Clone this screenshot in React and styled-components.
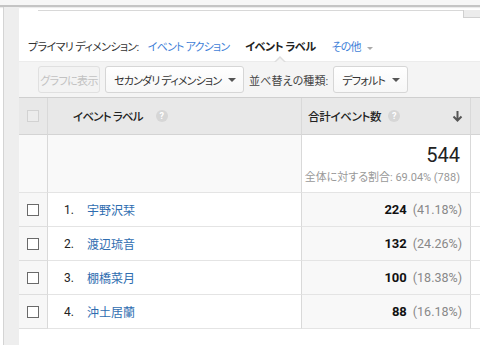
import React from "react";
import styled, { createGlobalStyle } from "styled-components";

const GlobalStyle = createGlobalStyle`
  html, body {
    margin: 0;
    padding: 0;
    background: #fff;
  }
  body {
    font-family: Roboto, "Noto Sans CJK JP", sans-serif;
    font-size: 11px;
    color: #222;
    font-feature-settings: "palt";
  }
`;

const rows = [
  { name: "宇野沢栞", value: 224, pct: "41.18%" },
  { name: "渡辺琉音", value: 132, pct: "24.26%" },
  { name: "棚橋菜月", value: 100, pct: "18.38%" },
  { name: "沖土居蘭", value: 88, pct: "16.18%" },
];

const Page = styled.div`
  width: 480px;
  height: 345px;
  overflow: hidden;
  display: flex;
  flex-direction: column;
`;

const TopBar = styled.div`
  height: 5px;
  background: #f6f6f6;
  border-bottom: 2px solid #c4c4c4;
  box-shadow: 0 1px 1px rgba(0, 0, 0, 0.08);
`;

const Body = styled.div`
  flex: 1;
  display: flex;
`;

const Rail = styled.div`
  width: 15px;
  margin-left: 3px;
  border-left: 1px solid #d4d4d4;
  background: #eeeeee;
`;

const Content = styled.div`
  flex: 1;
  display: flex;
  flex-direction: column;
  min-width: 0;
`;

const PrevPanel = styled.div`
  display: flex;
  align-items: flex-start;
  height: 15px;
  padding-left: 19px;
  margin-top: 3px;
`;

const PrevLine = styled.div`
  flex: 1;
  height: 1px;
  background: #d8d8d8;
`;

const PrevTab = styled.div`
  width: 16px;
  height: 7px;
  background: #ececec;
  border-left: 1px solid #d0d0d0;
  border-bottom: 1px solid #d0d0d0;
`;

const DimensionBar = styled.div`
  box-sizing: border-box;
  display: flex;
  align-items: flex-end;
  gap: 16px;
  height: 36px;
  padding: 0 0 5px 9px;
  white-space: nowrap;
  font-size: 11px;
  line-height: 16px;
`;

const DimGroup = styled.div`
  display: flex;
  align-items: center;
  gap: 9px;
`;

const DimLabel = styled.span`
  color: #333;
  letter-spacing: -0.6px;
`;

const DimLink = styled.span`
  color: ${(p) => (p.$active ? "#222" : "#3f7fd8")};
  font-weight: ${(p) => (p.$active ? 700 : 400)};
  letter-spacing: ${(p) => (p.$active ? "-0.5px" : "-0.8px")};
`;

const SmallCaret = styled.span`
  display: inline-block;
  margin-left: 6px;
  width: 0;
  height: 0;
  border-left: 3px solid transparent;
  border-right: 3px solid transparent;
  border-top: 3px solid #aaa;
  vertical-align: middle;
`;

const Toolbar = styled.div`
  position: relative;
  box-sizing: border-box;
  display: flex;
  align-items: center;
  gap: 5px;
  height: 36px;
  padding-left: 19px;
  background: #f4f4f4;
  border-top: 1px solid #ececec;

  &::before {
    content: "";
    position: absolute;
    left: 255px;
    top: -6px;
    width: 0;
    height: 0;
    border-left: 6px solid transparent;
    border-right: 6px solid transparent;
    border-bottom: 6px solid #dedede;
  }
  &::after {
    content: "";
    position: absolute;
    left: 256px;
    top: -4px;
    width: 0;
    height: 0;
    border-left: 5px solid transparent;
    border-right: 5px solid transparent;
    border-bottom: 5px solid #f4f4f4;
  }
`;

const Button = styled.div`
  display: flex;
  align-items: center;
  justify-content: ${(p) => (p.$disabled ? "center" : "space-between")};
  box-sizing: border-box;
  height: 27px;
  width: ${(p) => p.$w}px;
  padding: ${(p) => (p.$disabled ? "0" : "0 7px 0 8px")};
  border: 1px solid ${(p) => (p.$disabled ? "#e0e0e0" : "#d6d6d6")};
  border-radius: 3px;
  background: ${(p) =>
    p.$disabled ? "#f3f3f3" : "linear-gradient(#ffffff, #f7f7f7)"};
  color: ${(p) => (p.$disabled ? "#c2c2c2" : "#333")};
  white-space: nowrap;
  letter-spacing: ${(p) => (p.$disabled ? "-0.6px" : "-0.8px")};
`;

const Caret = styled.span`
  flex: none;
  width: 0;
  height: 0;
  border-left: 4px solid transparent;
  border-right: 4px solid transparent;
  border-top: 4px solid #555;
`;

const ToolLabel = styled.span`
  color: #444;
  white-space: nowrap;
  letter-spacing: 0.1px;
`;

const Table = styled.div`
  display: grid;
  grid-template-columns: 29px 254px 169px 1fr;
  border-top: 1px solid #cfcfcf;
`;

const Cell = styled.div`
  box-sizing: border-box;
  display: flex;
  align-items: center;
  height: ${(p) => p.$h || 34}px;
  background: ${(p) => p.$bg || "#fff"};
  border-bottom: 1px solid ${(p) => p.$line || "#e4e4e4"};
  border-right: ${(p) => (p.$noRight ? "none" : "1px solid #d9d9d9")};
  justify-content: ${(p) => p.$justify || "flex-start"};
  padding: ${(p) => p.$pad || "0"};
  white-space: nowrap;
  min-width: 0;
`;

const Check = styled.span`
  box-sizing: border-box;
  width: 12px;
  height: 12px;
  margin-left: 8px;
  border: 1px solid ${(p) => (p.$muted ? "#d2d2d2" : "#6a6a6a")};
  background: ${(p) => (p.$muted ? "#ececec" : "#fff")};
`;

const HeadText = styled.span`
  color: #222;
  font-weight: 500;
  font-size: 11.5px;
  letter-spacing: ${(p) => p.$ls || "-0.3px"};
`;

const Help = styled.span`
  display: inline-flex;
  align-items: center;
  justify-content: center;
  width: 12px;
  height: 12px;
  margin-left: ${(p) => p.$gap || 9}px;
  border-radius: 50%;
  background: #d6d6d6;
  color: #fff;
  font-size: 9px;
  font-weight: 700;
  line-height: 1;
`;

const HeadSpacer = styled.span`
  flex: 1;
`;

const SortArrow = styled.svg`
  width: 11px;
  height: 12px;
`;

const Summary = styled.div`
  display: flex;
  flex-direction: column;
  align-items: flex-end;
  gap: 1px;
`;

const Big = styled.span`
  font-size: 20px;
  color: #222;
  line-height: 24px;
`;

const SummaryNote = styled.span`
  font-size: 11px;
  color: #999;
`;

const Index = styled.span`
  width: 23px;
  margin-left: 16px;
  color: #222;
  font-size: 12px;
`;

const Name = styled.span`
  color: #2f6db0;
  font-size: 12px;
`;

const Value = styled.span`
  font-weight: 700;
  color: #111;
  font-size: 13px;
`;

const Pct = styled.span`
  color: #888;
  font-size: 12.5px;
  margin-left: 6px;
`;

const App = () => {
  return (
    <>
      <GlobalStyle />
      <Page>
        <TopBar />
        <Body>
          <Rail />
          <Content>
            <PrevPanel>
              <PrevLine />
              <PrevTab />
            </PrevPanel>
            <DimensionBar>
              <DimGroup>
                <DimLabel>プライマリ ディメンション:</DimLabel>
                <DimLink>イベント アクション</DimLink>
              </DimGroup>
              <DimLink $active>イベント ラベル</DimLink>
              <DimLink>
                その他
                <SmallCaret />
              </DimLink>
            </DimensionBar>
            <Toolbar>
              <Button $w={62} $disabled>
                グラフに表示
              </Button>
              <Button $w={139}>
                セカンダリ ディメンション
                <Caret />
              </Button>
              <ToolLabel>並べ替えの種類:</ToolLabel>
              <Button $w={75}>
                デフォルト
                <Caret />
              </Button>
            </Toolbar>
            <Table>
              <Cell $h={37} $bg="#e8e8e8" $line="#d4d4d4">
                <Check $muted />
              </Cell>
              <Cell $h={37} $bg="#e8e8e8" $line="#d4d4d4" $pad="0 0 0 25px">
                <HeadText $ls="-0.8px">イベント ラベル</HeadText>
                <Help $gap={13}>?</Help>
              </Cell>
              <Cell $h={37} $bg="#e8e8e8" $line="#d4d4d4" $pad="0 7px 0 6px">
                <HeadText>合計イベント数</HeadText>
                <Help $gap={7}>?</Help>
                <HeadSpacer />
                <SortArrow viewBox="0 0 11 12">
                  <path
                    d="M5.5 1 V10 M1.5 6.5 L5.5 10.5 L9.5 6.5"
                    stroke="#555"
                    strokeWidth="2"
                    fill="none"
                  />
                </SortArrow>
              </Cell>
              <Cell $h={37} $bg="#e8e8e8" $line="#d4d4d4" $noRight />

              <Cell $h={58} $bg="#f9f9f9" />
              <Cell $h={58} $bg="#f9f9f9" />
              <Cell $h={58} $justify="flex-end" $pad="0 10px 0 0">
                <Summary>
                  <Big>544</Big>
                  <SummaryNote>全体に対する割合: 69.04% (788)</SummaryNote>
                </Summary>
              </Cell>
              <Cell $h={58} $noRight />

              {rows.map((r, i) => (
                <React.Fragment key={r.name}>
                  <Cell $bg="#f7f7f7" $line="#dedede">
                    <Check />
                  </Cell>
                  <Cell>
                    <Index>{i + 1}.</Index>
                    <Name>{r.name}</Name>
                  </Cell>
                  <Cell $bg="#f8f8f8" $justify="flex-end" $pad="0 8px 0 0">
                    <Value>{r.value}</Value>
                    <Pct>({r.pct})</Pct>
                  </Cell>
                  <Cell $noRight />
                </React.Fragment>
              ))}
            </Table>
          </Content>
        </Body>
      </Page>
    </>
  );
};

export default App;
